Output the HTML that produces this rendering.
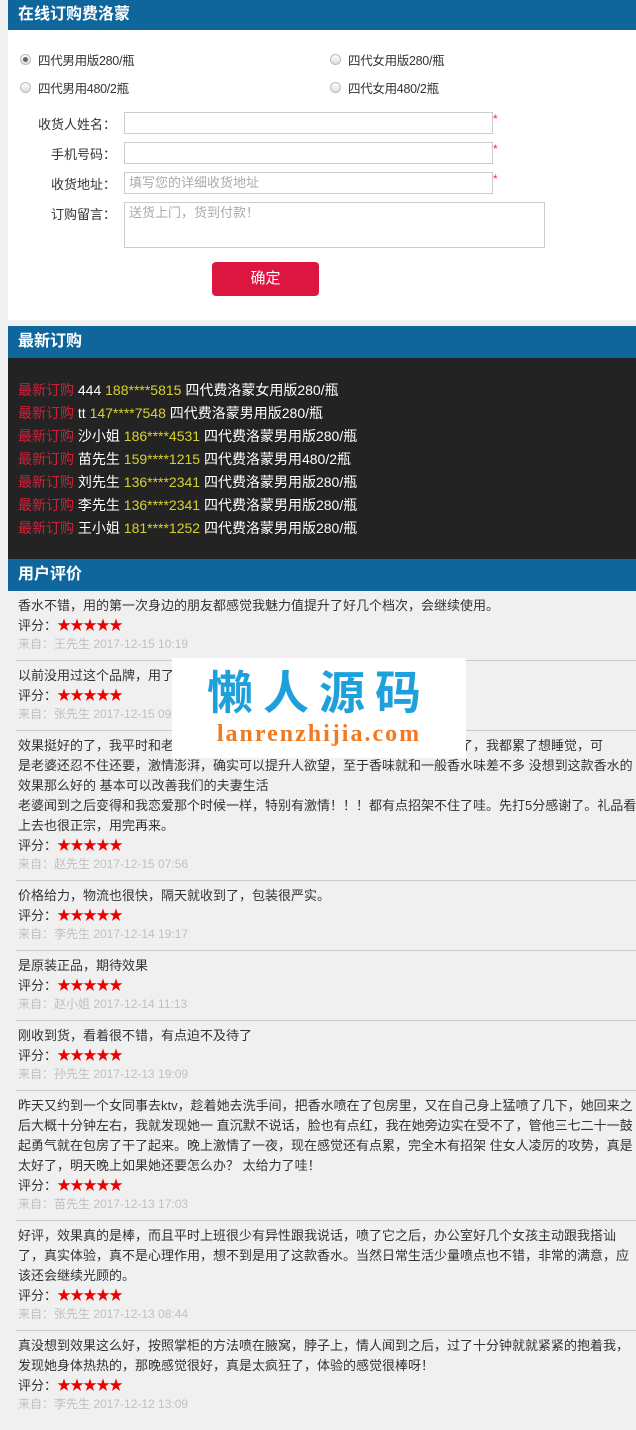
<!DOCTYPE html>
<html><head><meta charset="utf-8"><style>
*{margin:0;padding:0;box-sizing:border-box}
body{width:636px;height:1430px;overflow:hidden;background:#f0f0f0;font-family:"Liberation Sans","Microsoft YaHei","Noto Sans CJK SC",sans-serif;color:#333;position:relative}
.wrap{margin-left:8px;width:628px}
.hd{background:#0e669c;color:#fff;font-size:16px;font-weight:bold;height:30px;line-height:30px;padding-left:10px}
.form{background:#fff;height:290px;position:relative;font-size:13px;color:#333}
.r{position:absolute;display:flex;align-items:center;font-size:12.5px;letter-spacing:-0.3px}
.rb{width:11px;height:11px;border-radius:50%;border:1px solid #bbb;background:linear-gradient(#fff,#ddd);margin-right:7px;position:relative}
.rb.on:after{content:"";position:absolute;left:2px;top:2px;width:5px;height:5px;border-radius:50%;background:#666}
.lb{position:absolute;right:520px;font-size:13px;text-align:right}
.in{position:absolute;left:116px;width:369px;height:22px;border:1px solid #ccc;background:#fff;font-size:13px;color:#aaa;padding-left:4px;line-height:20px}
.st{position:absolute;left:485px;color:#e33;font-size:12px}
.btn{position:absolute;left:204px;top:232px;width:107px;height:34px;background:#dc1640;border-radius:4px;color:#fff;font-size:15px;text-align:center;line-height:34px}
.orders{background:#232323;height:201px;padding-top:21px;padding-left:10px;font-size:14px;color:#fff}
.orders div{height:23px;line-height:23px;white-space:nowrap}
.orders .a{color:#d3203a}.orders .y{color:#d7d12e}
.rev{padding:0 0 0 10px;font-size:13px;overflow:hidden}
.it{padding:5px 0 6px;border-bottom:1px solid #ccc;margin-left:-2px;padding-left:2px}
.it p{line-height:20px;white-space:nowrap}
.sc{line-height:18px}
.sc b{color:#e00;font-weight:normal;font-size:14px;letter-spacing:-1px}
.fr{line-height:19px;color:#c0c0c0;font-size:12px}
.wm{position:absolute;left:172px;top:658px;width:294px;height:100px;background:#fff;text-align:center}
.wm .t{color:#1ea0dc;font-size:46px;font-weight:bold;letter-spacing:10px;line-height:60px;padding-top:2px;font-family:"Noto Sans CJK SC",sans-serif}
.wm .u{color:#f07a22;font-size:24px;font-weight:bold;font-family:"Liberation Serif",serif;letter-spacing:2px;line-height:28px}
</style></head><body>
<div class="wrap">
<div class="hd">在线订购费洛蒙</div>
<div class="form">
<div class="r" style="left:12px;top:20px"><span class="rb on"></span>四代男用版280/瓶</div>
<div class="r" style="left:322px;top:20px"><span class="rb"></span>四代女用版280/瓶</div>
<div class="r" style="left:12px;top:48px"><span class="rb"></span>四代男用480/2瓶</div>
<div class="r" style="left:322px;top:48px"><span class="rb"></span>四代女用480/2瓶</div>
<div class="lb" style="top:84px">收货人姓名：</div>
<div class="in" style="top:82px"></div><div class="st" style="top:82px">*</div>
<div class="lb" style="top:114px">手机号码：</div>
<div class="in" style="top:112px"></div><div class="st" style="top:112px">*</div>
<div class="lb" style="top:144px">收货地址：</div>
<div class="in" style="top:142px">填写您的详细收货地址</div><div class="st" style="top:142px">*</div>
<div class="lb" style="top:174px">订购留言：</div>
<div class="in" style="top:172px;width:421px;height:46px">送货上门，货到付款！</div>
<div class="btn">确定</div>
</div>
<div style="height:6px"></div>
<div class="hd" style="height:32px;line-height:32px">最新订购</div>
<div class="orders">
<div><span class="a">最新订购</span> 444 <span class="y">188****5815</span> 四代费洛蒙女用版280/瓶</div>
<div><span class="a">最新订购</span> tt <span class="y">147****7548</span> 四代费洛蒙男用版280/瓶</div>
<div><span class="a">最新订购</span> 沙小姐 <span class="y">186****4531</span> 四代费洛蒙男用版280/瓶</div>
<div><span class="a">最新订购</span> 苗先生 <span class="y">159****1215</span> 四代费洛蒙男用480/2瓶</div>
<div><span class="a">最新订购</span> 刘先生 <span class="y">136****2341</span> 四代费洛蒙男用版280/瓶</div>
<div><span class="a">最新订购</span> 李先生 <span class="y">136****2341</span> 四代费洛蒙男用版280/瓶</div>
<div><span class="a">最新订购</span> 王小姐 <span class="y">181****1252</span> 四代费洛蒙男用版280/瓶</div>
</div>
<div class="hd" style="height:32px;line-height:32px">用户评价</div>
<div class="rev">
<div class="it"><p>香水不错，用的第一次身边的朋友都感觉我魅力值提升了好几个档次，会继续使用。</p><div class="sc">评分：<b>★★★★★</b></div><div class="fr">来自：王先生 2017-12-15 10:19</div></div>
<div class="it"><p>以前没用过这个品牌，用了之后感觉还不错，会继续回购的。</p><div class="sc">评分：<b>★★★★★</b></div><div class="fr">来自：张先生 2017-12-15 09:21</div></div>
<div class="it"><p>效果挺好的了，我平时和老婆一般都是一次，用了这款香水之后一晚上两次完了，我都累了想睡觉，可</p><p>是老婆还忍不住还要，激情澎湃，确实可以提升人欲望，至于香味就和一般香水味差不多 没想到这款香水的</p><p>效果那么好的 基本可以改善我们的夫妻生活</p><p>老婆闻到之后变得和我恋爱那个时候一样，特别有激情！！！都有点招架不住了哇。先打5分感谢了。礼品看</p><p>上去也很正宗，用完再来。</p><div class="sc">评分：<b>★★★★★</b></div><div class="fr">来自：赵先生 2017-12-15 07:56</div></div>
<div class="it"><p>价格给力，物流也很快，隔天就收到了，包装很严实。</p><div class="sc">评分：<b>★★★★★</b></div><div class="fr">来自：李先生 2017-12-14 19:17</div></div>
<div class="it"><p>是原装正品，期待效果</p><div class="sc">评分：<b>★★★★★</b></div><div class="fr">来自：赵小姐 2017-12-14 11:13</div></div>
<div class="it"><p>刚收到货，看着很不错，有点迫不及待了</p><div class="sc">评分：<b>★★★★★</b></div><div class="fr">来自：孙先生 2017-12-13 19:09</div></div>
<div class="it"><p>昨天又约到一个女同事去ktv，趁着她去洗手间，把香水喷在了包房里，又在自己身上猛喷了几下，她回来之</p><p>后大概十分钟左右，我就发现她一 直沉默不说话，脸也有点红，我在她旁边实在受不了，管他三七二十一鼓</p><p>起勇气就在包房了干了起来。晚上激情了一夜，现在感觉还有点累，完全木有招架 住女人凌厉的攻势，真是</p><p>太好了，明天晚上如果她还要怎么办？ 太给力了哇！</p><div class="sc">评分：<b>★★★★★</b></div><div class="fr">来自：苗先生 2017-12-13 17:03</div></div>
<div class="it"><p>好评，效果真的是棒，而且平时上班很少有异性跟我说话，喷了它之后，办公室好几个女孩主动跟我搭讪</p><p>了，真实体验，真不是心理作用，想不到是用了这款香水。当然日常生活少量喷点也不错，非常的满意，应</p><p>该还会继续光顾的。</p><div class="sc">评分：<b>★★★★★</b></div><div class="fr">来自：张先生 2017-12-13 08:44</div></div>
<div class="it" style="border-bottom:none"><p>真没想到效果这么好，按照掌柜的方法喷在腋窝，脖子上，情人闻到之后，过了十分钟就就紧紧的抱着我，</p><p>发现她身体热热的，那晚感觉很好，真是太疯狂了，体验的感觉很棒呀！</p><div class="sc">评分：<b>★★★★★</b></div><div class="fr">来自：李先生 2017-12-12 13:09</div></div>
</div>
</div>
<div class="wm"><div class="t">懒人源码</div><div class="u">lanrenzhijia.com</div></div>
</body></html>
